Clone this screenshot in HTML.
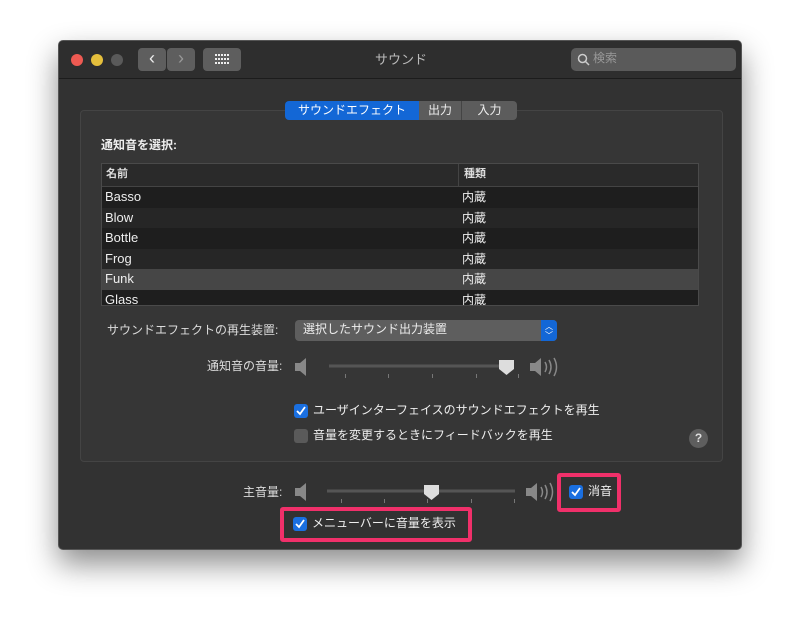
<!DOCTYPE html>
<html><head><meta charset="utf-8"><style>
*{margin:0;padding:0;box-sizing:border-box}
body{width:800px;height:627px;background:#fff;position:relative;overflow:hidden;font-family:"Liberation Sans","Noto Sans CJK JP",sans-serif;color:#ddd;font-size:12px}
.a{position:absolute}
.win{left:58px;top:40px;width:684px;height:510px;background:#323232;border-radius:5px;box-shadow:0 14px 30px rgba(0,0,0,.45);overflow:hidden;border:1px solid #555}
.tb{left:0;top:0;width:100%;height:38px;background:#2e2e2e;border-bottom:1px solid #1c1c1c}
.dot{width:12px;height:12px;border-radius:50%;top:13px}
.btn{background:#5e5e5e;border-radius:4px;height:23px;top:7px}
.row{left:0;width:597px;height:20.5px;line-height:20.5px;font-size:13px;color:#eee}
.row span{position:absolute;left:3px}.row b{position:absolute;left:360px;font-weight:normal;font-size:12px}
.cb{width:14px;height:14px;border-radius:3px;background:#1a6fe0}
.cb svg{position:absolute;left:2px;top:2px}
.cbo{width:14px;height:14px;border-radius:3px;background:#5a5a5a}
.hl{border:4px solid #f0306a;border-radius:3px}
</style></head><body>
<div class="a win">
 <div class="a tb">
  <div class="a dot" style="left:12px;background:#ee5a52"></div>
  <div class="a dot" style="left:32px;background:#e5bf3c"></div>
  <div class="a dot" style="left:52px;background:#5a5a5a"></div>
  <div class="a btn" style="left:79px;width:28px;color:#eee;font-size:18px;text-align:center;line-height:21px">‹</div>
  <div class="a btn" style="left:108px;width:28px;color:#999;font-size:18px;text-align:center;line-height:21px">›</div>
  <div class="a btn" style="left:144px;width:38px">
   <svg class="a" style="left:12px;top:6px" width="14" height="11" fill="#eee"><rect x="0" y="0" width="2" height="2"/><rect x="3" y="0" width="2" height="2"/><rect x="6" y="0" width="2" height="2"/><rect x="9" y="0" width="2" height="2"/><rect x="12" y="0" width="2" height="2"/><rect x="0" y="4" width="2" height="2"/><rect x="3" y="4" width="2" height="2"/><rect x="6" y="4" width="2" height="2"/><rect x="9" y="4" width="2" height="2"/><rect x="12" y="4" width="2" height="2"/><rect x="0" y="8" width="2" height="2"/><rect x="3" y="8" width="2" height="2"/><rect x="6" y="8" width="2" height="2"/><rect x="9" y="8" width="2" height="2"/><rect x="12" y="8" width="2" height="2"/></svg></div>
  <div class="a" style="left:0;width:684px;top:8px;text-align:center;color:#bbb;font-size:13px">サウンド</div>
  <div class="a" style="left:512px;top:7px;width:165px;height:23px;background:#5a5a5a;border-radius:5px;color:#999;font-size:12px;line-height:21px;padding-left:22px">検索
   <svg class="a" style="left:6px;top:5px" width="13" height="13"><circle cx="5.5" cy="5.5" r="4" stroke="#ccc" stroke-width="1.5" fill="none"/><line x1="8.5" y1="8.5" x2="12" y2="12" stroke="#ccc" stroke-width="1.5"/></svg></div>
 </div>
 <div class="a" style="left:21px;top:69px;width:643px;height:352px;border:1px solid #444;border-radius:4px;background:#363636"></div>
 <div class="a" style="left:226px;top:60px;width:134px;height:19px;background:#1367d6;border-radius:4px 0 0 4px;color:#fff;text-align:center;line-height:18px;font-size:12px">サウンドエフェクト</div>
 <div class="a" style="left:360px;top:60px;width:42px;height:19px;background:#5c5c5c;color:#eee;text-align:center;line-height:18px">出力</div>
 <div class="a" style="left:402px;top:60px;width:56px;height:19px;background:#5c5c5c;border-left:1px solid #444;border-radius:0 4px 4px 0;color:#eee;text-align:center;line-height:18px">入力</div>
 <div class="a" style="left:42px;top:95px;font-weight:bold;font-size:12px;color:#eee">通知音を選択:</div>
 <div class="a" style="left:42px;top:122px;width:598px;height:143px;border:1px solid #4a4a4a;background:#1e1e1e;overflow:hidden">
  <div class="a" style="left:0;top:0;width:100%;height:23px;background:#2a2a2a;border-bottom:1px solid #444;font-size:11px;font-weight:bold;line-height:21px"><span class="a" style="left:4px">名前</span><span class="a" style="left:356px;border-left:1px solid #444;height:23px;padding-left:5px">種類</span></div>
  <div class="a row" style="top:23px;background:#1e1e1e"><span>Basso</span><b>内蔵</b></div>
  <div class="a row" style="top:43.5px;background:#262626"><span>Blow</span><b>内蔵</b></div>
  <div class="a row" style="top:64px;background:#1e1e1e"><span>Bottle</span><b>内蔵</b></div>
  <div class="a row" style="top:84.5px;background:#262626"><span>Frog</span><b>内蔵</b></div>
  <div class="a row" style="top:105px;background:#464646"><span>Funk</span><b>内蔵</b></div>
  <div class="a row" style="top:125.5px;background:#1e1e1e"><span>Glass</span><b>内蔵</b></div>
 </div>
 <div class="a" style="left:48px;top:280px;color:#ddd">サウンドエフェクトの再生装置:</div>
 <div class="a" style="left:236px;top:279px;width:262px;height:21px;background:#5e5e5e;border-radius:4px;line-height:19px;padding-left:8px;color:#eee">選択したサウンド出力装置
  <div class="a" style="right:0;top:0;width:16px;height:21px;background:#1367d6;border-radius:0 4px 4px 0;color:#fff;font-size:8px;text-align:center;line-height:9px;padding-top:2px">︿<br>﹀</div></div>
 <div class="a" style="left:148px;top:316px">通知音の音量:</div>
 <svg class="a" style="left:234px;top:316px" width="270" height="28">
  <path d="M2 6h5l6-5v18l-6-5H2z" fill="#888"/>
  <line x1="36" y1="9" x2="210" y2="9" stroke="#555" stroke-width="3"/>
  <g fill="#777"><rect x="52" y="17" width="1" height="4"/><rect x="95" y="17" width="1" height="4"/><rect x="139" y="17" width="1" height="4"/><rect x="183" y="17" width="1" height="4"/><rect x="225" y="17" width="1" height="4"/></g>
  <path d="M206 3h15v9l-7.5 6-7.5-6z" fill="#ddd"/>
  <path d="M237 6h5l6-5v18l-6-5h-5z" fill="#888"/>
  <path d="M252 5q3 5 0 10M256 3q4 7 0 14M261 1q5 9 0 18" stroke="#888" stroke-width="1.5" fill="none"/>
 </svg>
 <div class="a cb" style="left:235px;top:363px"><svg width="10" height="10"><path d="M1 5l3 3 5-7" stroke="#fff" stroke-width="1.8" fill="none"/></svg></div>
 <div class="a" style="left:254px;top:360px;color:#eee">ユーザインターフェイスのサウンドエフェクトを再生</div>
 <div class="a cbo" style="left:235px;top:388px"></div>
 <div class="a" style="left:254px;top:385px;color:#eee">音量を変更するときにフィードバックを再生</div>
 <div class="a" style="left:630px;top:388px;width:19px;height:19px;border-radius:50%;background:#5e5e5e;color:#ddd;text-align:center;line-height:19px;font-size:12px;font-weight:bold">?</div>
 <div class="a" style="left:184px;top:442px">主音量:</div>
 <svg class="a" style="left:234px;top:441px" width="270" height="28">
  <path d="M2 6h5l6-5v18l-6-5H2z" fill="#888"/>
  <line x1="34" y1="9" x2="222" y2="9" stroke="#555" stroke-width="3"/>
  <g fill="#777"><rect x="48" y="17" width="1" height="4"/><rect x="91" y="17" width="1" height="4"/><rect x="134" y="17" width="1" height="4"/><rect x="178" y="17" width="1" height="4"/><rect x="221" y="17" width="1" height="4"/></g>
  <path d="M131 3h15v9l-7.5 6-7.5-6z" fill="#ddd"/>
  <path d="M233 6h5l6-5v18l-6-5h-5z" fill="#888"/>
  <path d="M248 5q3 5 0 10M252 3q4 7 0 14M257 1q5 9 0 18" stroke="#888" stroke-width="1.5" fill="none"/>
 </svg>
 <div class="a hl" style="left:498px;top:432px;width:64px;height:39px"></div>
 <div class="a cb" style="left:510px;top:444px"><svg width="10" height="10"><path d="M1 5l3 3 5-7" stroke="#fff" stroke-width="1.8" fill="none"/></svg></div>
 <div class="a" style="left:529px;top:441px;color:#eee">消音</div>
 <div class="a hl" style="left:221px;top:466px;width:192px;height:35px"></div>
 <div class="a cb" style="left:234px;top:476px"><svg width="10" height="10"><path d="M1 5l3 3 5-7" stroke="#fff" stroke-width="1.8" fill="none"/></svg></div>
 <div class="a" style="left:253px;top:473px;color:#eee">メニューバーに音量を表示</div>
</div>
</body></html>
